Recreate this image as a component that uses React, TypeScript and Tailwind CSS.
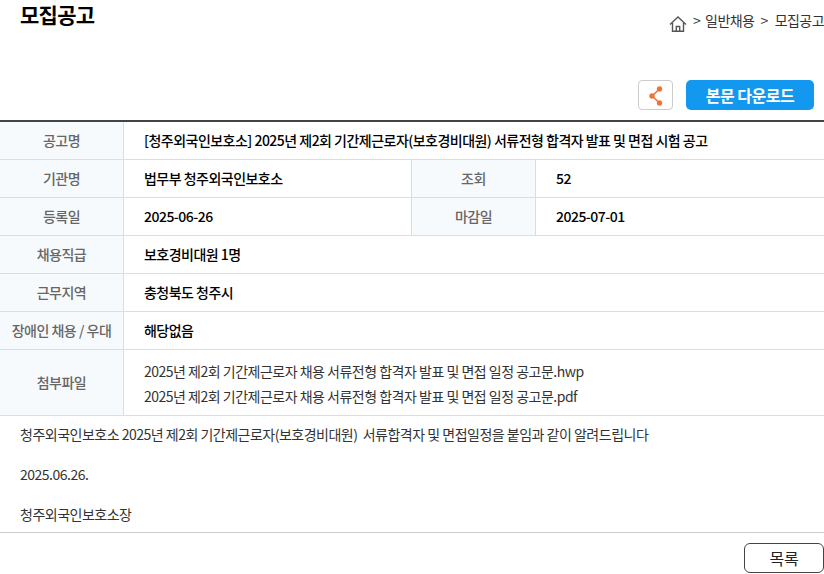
import React from "react";

function Label({ children, className = "" }: { children: React.ReactNode; className?: string }) {
  return (
    <div className={`flex items-center justify-center bg-[#f7fafd] text-[14px] font-medium tracking-[-0.5px] text-[#666] border-r border-[#ddd] ${className}`}>
      {children}
    </div>
  );
}

function Value({ children, className = "" }: { children: React.ReactNode; className?: string }) {
  return (
    <div className={`flex items-center pl-5 text-[14px] font-medium tracking-[-0.52px] text-black ${className}`}>
      {children}
    </div>
  );
}

function Row({ label, children }: { label: string; children: React.ReactNode }) {
  return (
    <div className="flex h-[38px] border-b border-[#ddd]">
      <Label className="w-[124px]">{label}</Label>
      {children}
    </div>
  );
}

export default function App() {
  return (
    <div className="h-[574px] w-[824px] overflow-hidden bg-white font-['Noto_Sans_CJK_KR',sans-serif]">
      <div className="flex h-[80px] items-start justify-between pl-5">
        <h1 className="text-[21px] leading-[28px] font-bold tracking-[-0.75px] text-black">모집공고</h1>
        <div className="mt-[10px] flex items-start whitespace-nowrap text-[14px] leading-[20px] tracking-[-0.55px] text-[#333]">
          <svg width="18" height="18" viewBox="0 0 18 18" fill="none" stroke="#555" strokeWidth="1.4" className="mt-[5px] mr-[6px]">
            <path d="M1 9.5 9 2l8 7.5" />
            <path d="M3.5 8v8.2h11V8" />
            <path d="M7.3 16.2v-4.7h3.4v4.7" />
          </svg>
          <span>&gt;</span>
          <span className="ml-[5px]">일반채용</span>
          <span className="ml-[6px]">&gt;</span>
          <span className="ml-[7px]">모집공고</span>
        </div>
      </div>

      <div className="flex h-[40px] items-start justify-end gap-[13px] pr-[10px]">
        <button className="flex h-[30px] w-[35px] items-center justify-center rounded-[4px] border border-[#ccc] bg-white">
          <svg width="14" height="20" viewBox="0 0 14 20" fill="none" className="mt-[2px]">
            <path d="M10.5 3 3 10l7.5 7" stroke="#ee7339" strokeWidth="1.5" />
            <circle cx="10.5" cy="3" r="2.7" fill="#ee7339" />
            <circle cx="3" cy="10" r="2.7" fill="#ee7339" />
            <circle cx="10.5" cy="17" r="2.7" fill="#ee7339" />
          </svg>
        </button>
        <button className="flex h-[30px] w-[128px] items-center justify-center rounded-[5px] bg-[#1298ee] text-[16px] font-bold tracking-[-0.5px] text-white">
          본문 다운로드
        </button>
      </div>

      <div className="border-t-2 border-[#444]">
        <Row label="공고명">
          <Value>[청주외국인보호소] 2025년 제2회 기간제근로자(보호경비대원) 서류전형 합격자 발표 및 면접 시험 공고</Value>
        </Row>
        <Row label="기관명">
          <Value className="w-[288px] border-r border-[#ddd]">법무부 청주외국인보호소</Value>
          <Label className="w-[124px]">조회</Label>
          <Value>52</Value>
        </Row>
        <Row label="등록일">
          <Value className="w-[288px] border-r border-[#ddd]">2025-06-26</Value>
          <Label className="w-[124px]">마감일</Label>
          <Value>2025-07-01</Value>
        </Row>
        <Row label="채용직급">
          <Value>보호경비대원 1명</Value>
        </Row>
        <Row label="근무지역">
          <Value>충청북도 청주시</Value>
        </Row>
        <Row label="장애인 채용 / 우대">
          <Value>해당없음</Value>
        </Row>
        <div className="flex h-[66px] border-b border-[#ddd]">
          <Label className="w-[124px]">첨부파일</Label>
          <div className="flex flex-col justify-center pt-[2px] pl-5 text-[14px] leading-[25px] tracking-[-0.5px] text-[#333]">
            <div>2025년 제2회 기간제근로자 채용 서류전형 합격자 발표 및 면접 일정 공고문.hwp</div>
            <div>2025년 제2회 기간제근로자 채용 서류전형 합격자 발표 및 면접 일정 공고문.pdf</div>
          </div>
        </div>
      </div>

      <div className="h-[117px] border-b border-[#ccc] px-5 pt-[8px] text-[14px] leading-[20px] tracking-[-0.5px] text-[#333]">
        <p className="whitespace-pre">청주외국인보호소 2025년 제2회 기간제근로자(보호경비대원)  서류합격자 및 면접일정을 붙임과 같이 알려드립니다</p>
        <p className="mt-[20px]">2025.06.26.</p>
        <p className="mt-[20px]">청주외국인보호소장</p>
      </div>

      <div className="flex justify-end pt-[10px]">
        <button className="h-[30px] w-[80px] rounded-[6px] border border-[#444] bg-white text-[16px] tracking-[-0.3px] text-[#222]">
          목록
        </button>
      </div>
    </div>
  );
}
